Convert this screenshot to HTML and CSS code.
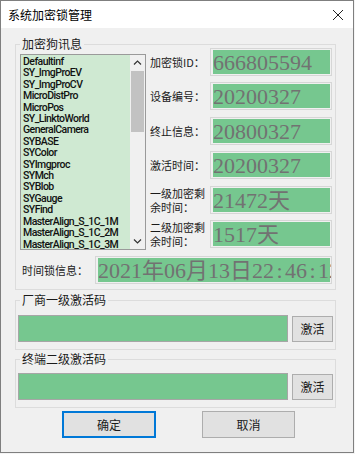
FILE: index.html
```html
<!DOCTYPE html>
<html lang="zh-CN">
<head>
    <meta charset="UTF-8">
    <meta name="viewport" content="width=device-width, initial-scale=1.0">
    <title>系统加密锁管理</title>
    <link rel="stylesheet" href="styles.css">
</head>
<body>
    <div class="window">
        <div class="titlebar">
            <span class="title">系统加密锁管理</span>
            <svg class="close" width="12" height="12" viewBox="0 0 12 12">
                <path d="M1 1 L11 11 M11 1 L1 11" stroke="#222" stroke-width="1"/>
            </svg>
        </div>
        <div class="client">
            <fieldset class="group group-info">
                <legend>加密狗讯息</legend>
                <div class="info-top">
                    <div class="listbox">
                        <ul class="items">
                            <li>Defaultinf</li>
                            <li>SY_ImgProEV</li>
                            <li>SY_ImgProCV</li>
                            <li>MicroDistPro</li>
                            <li>MicroPos</li>
                            <li>SY_LinktoWorld</li>
                            <li>GeneralCamera</li>
                            <li>SYBASE</li>
                            <li>SYColor</li>
                            <li>SYImgproc</li>
                            <li>SYMch</li>
                            <li>SYBlob</li>
                            <li>SYGauge</li>
                            <li>SYFind</li>
                            <li>MasterAlign_S_1C_1M</li>
                            <li>MasterAlign_S_1C_2M</li>
                            <li>MasterAlign_S_1C_3M</li>
                        </ul>
                        <div class="scrollbar">
                            <svg class="arrow" width="15" height="16" viewBox="0 0 15 16">
                                <path d="M4 9.5 L7.5 6 L11 9.5" fill="none" stroke="#333" stroke-width="1.2"/>
                            </svg>
                            <div class="track"><div class="thumb"></div></div>
                            <svg class="arrow" width="15" height="16" viewBox="0 0 15 16">
                                <path d="M4 6.5 L7.5 10 L11 6.5" fill="none" stroke="#333" stroke-width="1.2"/>
                            </svg>
                        </div>
                    </div>
                    <div class="fields">
                        <div class="field">
                            <div class="label">加密锁ID：</div>
                            <div class="value">666805594</div>
                        </div>
                        <div class="field">
                            <div class="label">设备编号：</div>
                            <div class="value">20200327</div>
                        </div>
                        <div class="field">
                            <div class="label">终止信息：</div>
                            <div class="value">20800327</div>
                        </div>
                        <div class="field">
                            <div class="label">激活时间：</div>
                            <div class="value">20200327</div>
                        </div>
                        <div class="field">
                            <div class="label">一级加密剩<br>余时间：</div>
                            <div class="value">21472天</div>
                        </div>
                        <div class="field">
                            <div class="label">二级加密剩<br>余时间：</div>
                            <div class="value">1517天</div>
                        </div>
                    </div>
                </div>
                <div class="time-row">
                    <div class="time-label">时间锁信息：</div>
                    <div class="value value-wide">2021年06月13日22<span class="colon">:</span>46<span class="colon">:</span>12</div>
                </div>
            </fieldset>

            <fieldset class="group group-code">
                <legend>厂商一级激活码</legend>
                <div class="code-row">
                    <input class="code-input" type="text">
                    <button class="btn-small">激活</button>
                </div>
            </fieldset>

            <fieldset class="group group-code group-last">
                <legend>终端二级激活码</legend>
                <div class="code-row">
                    <input class="code-input" type="text">
                    <button class="btn-small">激活</button>
                </div>
            </fieldset>

            <div class="actions">
                <button class="btn btn-default">确定</button>
                <button class="btn">取消</button>
            </div>
        </div>
    </div>
</body>
</html>
```

FILE: styles.css
```css
body {
    margin: 0;
    padding: 0;
    background-color: #f4f4f4;
    font-family: "Noto Sans CJK SC", "Noto Sans", sans-serif;
    font-size: 12px;
    color: #1a1a1a;
}
.window {
    width: 354px;
    height: 453px;
    box-sizing: border-box;
    border: 1px solid #7f7f7f;
    background-color: #f0f0f0;
    display: flex;
    flex-direction: column;
}
.titlebar {
    height: 27px;
    background-color: #fff;
    display: flex;
    align-items: center;
    justify-content: space-between;
    padding: 0 9px 0 7px;
}
.title {
    font-size: 12px;
    color: #000;
}
.client {
    flex: 1;
    padding-left: 14px;
}
/* group boxes */
.group {
    width: 321px;
    box-sizing: border-box;
    margin: 12px 0 0 0;
    padding: 0;
    border: 1px solid #dcdcdc;
    min-width: 0;
}
.group legend {
    font-size: 12px;
    line-height: 8px;
    padding: 0 2px;
    margin-left: 0;
    color: #1a1a1a;
}
.group-info {
    padding: 0 0 5px 4px;
}
.info-top {
    display: flex;
}
.listbox {
    margin-top: 6px;
    width: 126px;
    height: 196px;
    box-sizing: border-box;
    border: 1px solid #9a9a9a;
    background-color: #cfe9d2;
    display: flex;
    overflow: hidden;
}
.items {
    flex: 1;
    list-style: none;
    margin: 0;
    padding: 1px 0 0 2px;
    font-family: Roboto, "Liberation Sans", sans-serif;
    font-weight: 500;
    font-size: 10.5px;
    letter-spacing: -0.55px;
    line-height: 11.4px;
    color: #111;
    white-space: nowrap;
    overflow: hidden;
}
.scrollbar {
    width: 15px;
    background-color: #f0f0f0;
    display: flex;
    flex-direction: column;
}
.arrow {
    display: block;
}
.track {
    flex: 1;
    padding: 0 1px;
}
.thumb {
    height: 61px;
    background-color: #c2c2c2;
}
.fields {
    margin-left: 4px;
    display: flex;
    flex-direction: column;
    gap: 6.4px;
}
.field {
    display: flex;
    align-items: center;
}
.label {
    width: 60px;
    font-size: 11px;
    line-height: 14px;
}
.value {
    width: 122px;
    height: 28px;
    box-sizing: border-box;
    border: 1px solid #d6d6d6;
    padding: 1px;
    background-color: #76c78f;
    background-clip: content-box;
    font-family: "Liberation Serif", "Noto Sans CJK SC", serif;
    font-weight: normal;
    font-size: 22px;
    line-height: 25px;
    color: #727272;
    padding-left: 2px;
    white-space: nowrap;
    overflow: hidden;
}
.colon {
    display: inline-block;
    width: 11px;
    text-align: center;
}
.time-row {
    margin-top: 6px;
    display: flex;
    align-items: center;
}
.time-label {
    width: 73px;
    margin-left: 2px;
    font-size: 11px;
}
.value-wide {
    width: 237px;
}
/* activation code groups */
.group-code {
    margin-top: 6px;
    padding: 11px 0 7px 2px;
}
.group-code legend {
    margin-left: 2px;
}
.group-last {
    margin-top: 5px;
    padding-top: 10px;
}
.code-row {
    display: flex;
    align-items: center;
    gap: 4px;
}
.code-input {
    width: 270px;
    height: 27px;
    box-sizing: border-box;
    margin: 0;
    border: 1px solid #a6a6a6;
    background-color: #76c78f;
}
.btn-small {
    width: 41px;
    height: 26px;
    box-sizing: border-box;
    border: 1px solid #adadad;
    background-color: #e1e1e1;
    font-family: "Noto Sans CJK SC", sans-serif;
    font-size: 12px;
    color: #1a1a1a;
    padding: 0;
}
.actions {
    margin-top: 3px;
    display: flex;
    padding-left: 47px;
    gap: 46px;
}
.btn {
    width: 93px;
    height: 27px;
    box-sizing: border-box;
    border: 1px solid #adadad;
    background-color: #e1e1e1;
    font-family: "Noto Sans CJK SC", sans-serif;
    font-size: 12px;
    color: #1a1a1a;
    padding: 0;
}
.btn-default {
    width: 94px;
    border: 2px solid #0078d7;
}
```
